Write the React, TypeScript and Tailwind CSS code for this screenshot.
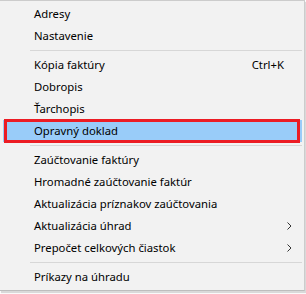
import React from "react";

type Item = { label: string; shortcut?: string; sub?: boolean; active?: boolean };

const groups: Item[][] = [
  [{ label: "Adresy" }, { label: "Nastavenie" }],
  [
    { label: "Kópia faktúry", shortcut: "Ctrl+K" },
    { label: "Dobropis" },
    { label: "Ťarchopis" },
    { label: "Opravný doklad", active: true },
  ],
  [
    { label: "Zaúčtovanie faktúry" },
    { label: "Hromadné zaúčtovanie faktúr" },
    { label: "Aktualizácia príznakov zaúčtovania" },
    { label: "Aktualizácia úhrad", sub: true },
    { label: "Prepočet celkových čiastok", sub: true },
  ],
  [{ label: "Príkazy na úhradu" }],
];

const Chevron = () => (
  <svg width="5" height="8" viewBox="0 0 5 8" className="text-[#333]">
    <path d="M0.5 0.5 L4 4 L0.5 7.5" fill="none" stroke="currentColor" strokeWidth="1" />
  </svg>
);

const MenuRow = ({ item }: { item: Item }) => (
  <div className="relative h-[22px] flex items-center">
    {item.active && (
      <>
        <div className="absolute left-[3px] right-[2px] top-0 bottom-0 bg-[#99ccf9]" />
        <div className="absolute left-[4px] right-[4px] top-[-1px] bottom-[-1px] border-[3px] border-[#ec1c24]" />
      </>
    )}
    <span className="relative pl-[34px] flex-1 text-[11.3px] text-black">{item.label}</span>
    {item.shortcut && <span className="relative pr-[20px] text-[11.3px] text-black">{item.shortcut}</span>}
    {item.sub && (
      <span className="relative pr-[12px] flex items-center">
        <Chevron />
      </span>
    )}
  </div>
);

export default function App() {
  return (
    <div className="w-[306px] h-[294px] bg-white" style={{ fontFamily: '"Noto Sans", "Open Sans", sans-serif' }}>
      <div className="w-[305px] h-[291px] bg-[#f2f2f2] border-t border-r border-b border-[#cccccc] border-b-[#bdbdbd] shadow-[1px_2px_1px_rgba(0,0,0,0.15)] pt-[2px]">
        {groups.map((g, gi) => (
          <div key={gi}>
            {gi > 0 && (
              <div className="h-[7px] flex items-center pl-[30px] pr-[2px]">
                <div className="h-px w-full bg-[#d7d7d7]" />
              </div>
            )}
            {g.map((it) => (
              <MenuRow key={it.label} item={it} />
            ))}
          </div>
        ))}
      </div>
    </div>
  );
}
